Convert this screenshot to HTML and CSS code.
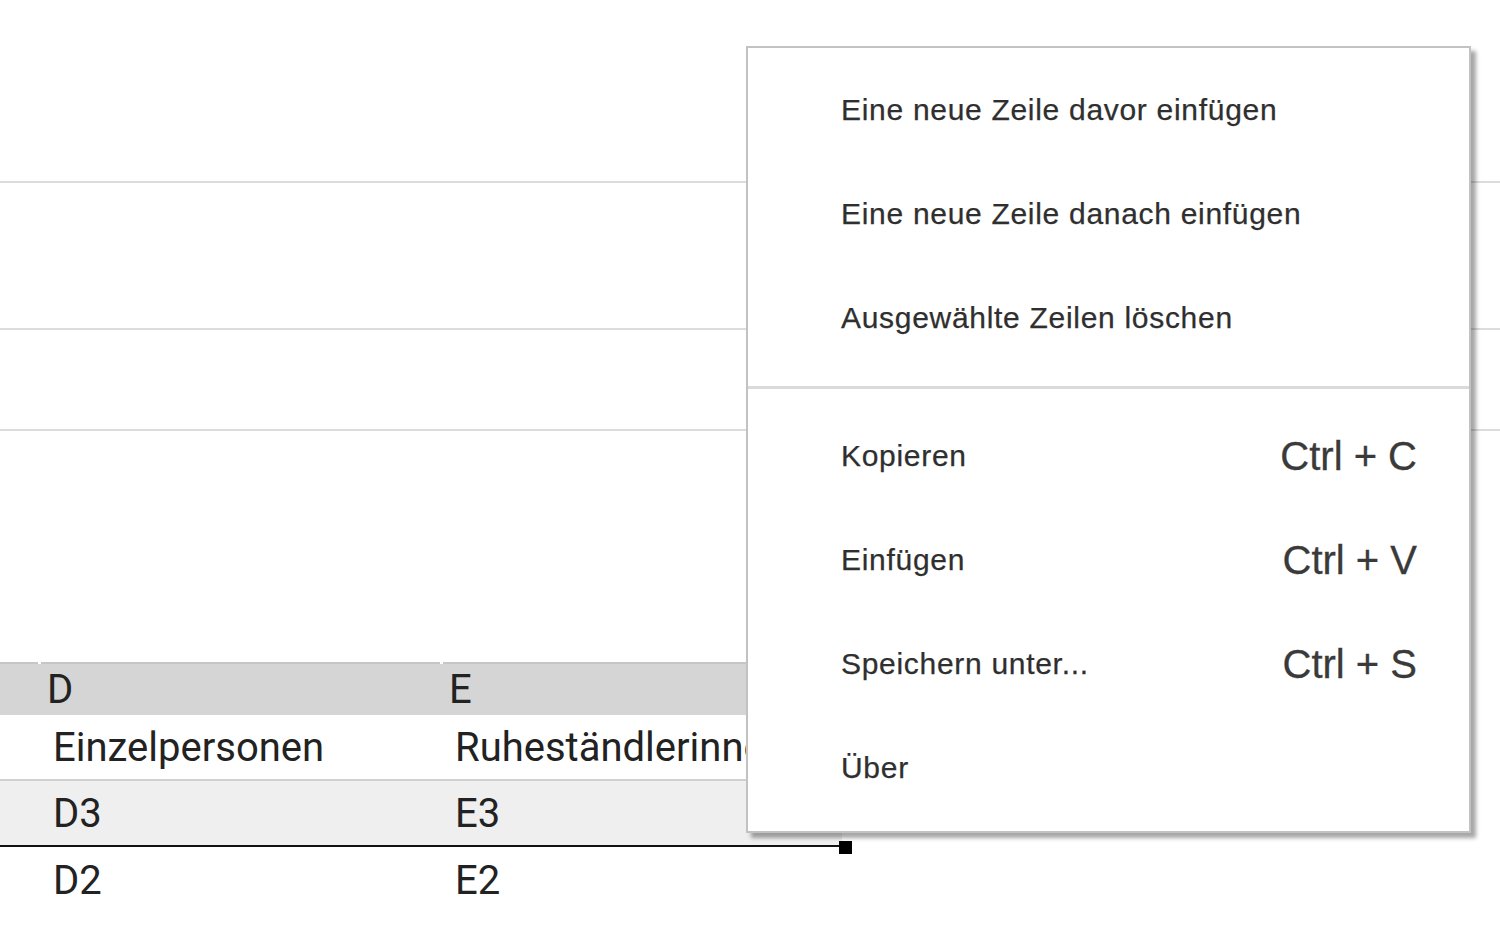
FILE: index.html
```html
<!DOCTYPE html>
<html lang="de">
<head>
  <meta charset="UTF-8" />
  <title>Tabelle</title>
  <link rel="stylesheet" href="styles.css">
</head>
<body>
  <div class="page">
    <div class="blank" style="height: 181px"></div>
    <div class="rule"></div>
    <div class="blank" style="height: 145px"></div>
    <div class="rule"></div>
    <div class="blank" style="height: 99px"></div>
    <div class="rule"></div>
    <div class="blank" style="height: 231px"></div>

    <div class="grid">
      <div class="row head">
        <div class="cell first"></div>
        <div class="cell">D</div>
        <div class="cell">E</div>
      </div>
      <div class="row">
        <div class="cell first"></div>
        <div class="cell">Einzelpersonen</div>
        <div class="cell">Ruheständlerinnen</div>
      </div>
      <div class="row alt selected">
        <div class="cell first"></div>
        <div class="cell">D3</div>
        <div class="cell">E3</div>
        <span class="handle"></span>
      </div>
      <div class="row last">
        <div class="cell first"></div>
        <div class="cell">D2</div>
        <div class="cell">E2</div>
      </div>
    </div>

    <ul class="menu">
      <li>Eine neue Zeile davor einfügen</li>
      <li>Eine neue Zeile danach einfügen</li>
      <li>Ausgewählte Zeilen löschen</li>
      <li class="sep"></li>
      <li>Kopieren <span class="key">Ctrl + C</span></li>
      <li>Einfügen <span class="key">Ctrl + V</span></li>
      <li>Speichern unter... <span class="key">Ctrl + S</span></li>
      <li>Über</li>
    </ul>
  </div>
</body>
</html>
```

FILE: styles.css
```css
* {margin: 0; padding: 0; box-sizing: border-box;}
body {
  background: #fff;
  overflow: hidden;
}
.page {
  position: relative;
  width: 1500px;
  height: 927px;
}
.rule {
  height: 2px;
  background: #dcdcdc;
}

/* таблица */
.grid {
  width: 900px;
  font-family: Roboto, sans-serif;
  font-size: 40px;
  color: #222;
}
.row {
  position: relative;
  display: flex;
  height: 66px;
  align-items: center;
  border-bottom: 2px solid #d0d0d0;
}
.row.head {
  height: 53px;
  background: #d5d5d5;
  border-top: 2px solid #c6c6c6;
  border-bottom: none;
}
.row.alt {
  background: #efefef;
  height: 66px;
}
.row.selected {
  border-bottom: 2px solid #111;
  width: 842px;
}
.row.last {border-bottom: none;}
.cell {
  position: relative;
  width: 402px;
  padding-left: 15px;
  white-space: nowrap;
  overflow: hidden;
}
.cell.first {
  width: 38px;
  padding: 0;
}
.head .cell {
  padding-left: 9px;
  height: 51px;
  display: flex;
  align-items: center;
  overflow: visible;
}
.head .cell:not(.first)::before {
  content: "";
  position: absolute;
  left: 0;
  top: -2px;
  width: 3px;
  height: 2px;
  background: #fff;
}
.handle {
  position: absolute;
  right: -10px;
  bottom: -9px;
  width: 13px;
  height: 13px;
  background: #000;
}

/* контекстное меню */
.menu {
  position: absolute;
  left: 746px;
  top: 46px;
  width: 725px;
  height: 787px;
  list-style: none;
  background: #fff;
  border: 2px solid #c2c2c2;
  box-shadow: 5px 5px 4px rgba(0, 0, 0, 0.35);
  padding: 10px 0;
  font-family: "Liberation Sans", Arial, sans-serif;
  font-size: 30px;
  letter-spacing: 0.7px;
  color: #2f2f2f;
  -webkit-text-stroke: 0.25px #2f2f2f;
}
.menu li {
  display: flex;
  align-items: center;
  justify-content: space-between;
  height: 104px;
  padding: 0 52px 0 93px;
}
.menu li.sep {
  height: 34px;
  padding: 0;
  border-top: 16px solid #fff;
  border-bottom: 15px solid #fff;
  background: #dadada;
}
.menu .key {
  font-size: 40px;
  letter-spacing: 0;
  color: #3a3a3a;
  -webkit-text-stroke: 0.3px #3a3a3a;
}
```
